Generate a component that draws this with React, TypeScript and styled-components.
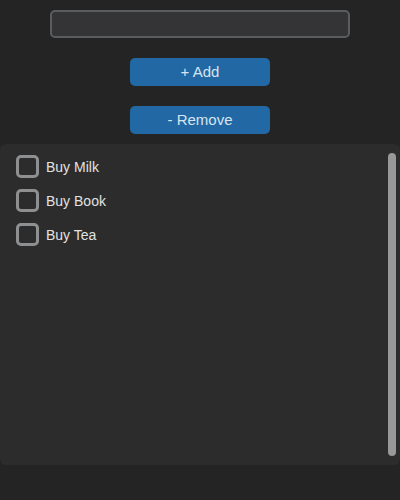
import React, { useState } from "react";
import styled, { createGlobalStyle } from "styled-components";

const Global = createGlobalStyle`
  html, body { margin: 0; padding: 0; background: #242424; }
  body { font-family: "Liberation Sans", Arial, sans-serif; }
`;

const Page = styled.div`
  width: 400px;
  height: 500px;
  display: flex;
  flex-direction: column;
  align-items: center;
  padding-top: 10px;
  box-sizing: border-box;
`;

const TextInput = styled.input`
  width: 300px;
  height: 28px;
  box-sizing: border-box;
  background: #343436;
  border: 2px solid #5a5d60;
  border-radius: 5px;
  outline: none;
  color: #e0e0e0;
  font: 14px "Liberation Sans", Arial, sans-serif;
  padding: 0 8px;
`;

const Button = styled.button<{ $top: number }>`
  margin-top: ${(p) => p.$top}px;
  width: 140px;
  height: 28px;
  border: none;
  border-radius: 5px;
  background: #2168a4;
  color: #d8e4f0;
  font: 15px "Liberation Sans", Arial, sans-serif;
  padding: 0 0 2px 0;
  cursor: pointer;
`;

const Panel = styled.div`
  margin-top: 10px;
  width: 400px;
  height: 321px;
  box-sizing: border-box;
  background: #2c2c2c;
  border-radius: 6px;
  display: flex;
  padding: 11px 4px 9px 16px;
`;

const List = styled.div`
  flex: 1;
  display: flex;
  flex-direction: column;
  gap: 11px;
`;

const Row = styled.label`
  display: flex;
  align-items: center;
  gap: 7px;
  height: 23px;
  color: #e2e2e2;
  font-size: 14px;
  cursor: pointer;
`;

const Box = styled.span<{ $checked: boolean }>`
  width: 23px;
  height: 23px;
  box-sizing: border-box;
  border: 3px solid #8d8f91;
  border-radius: 5px;
  background: ${(p) => (p.$checked ? "#2168a4" : "transparent")};
`;

const Scrollbar = styled.div`
  width: 8px;
  margin-top: -2px;
  margin-bottom: 0px;
  background: #989898;
  border-radius: 4px;
`;

export default function App() {
  const [items] = useState(["Buy Milk", "Buy Book", "Buy Tea"]);
  const [checked, setChecked] = useState<boolean[]>([false, false, false]);
  return (
    <>
      <Global />
      <Page>
        <TextInput />
        <Button $top={20}>+ Add</Button>
        <Button $top={20}>- Remove</Button>
        <Panel>
          <List>
            {items.map((it, i) => (
              <Row
                key={it}
                onClick={() =>
                  setChecked((c) => c.map((v, j) => (j === i ? !v : v)))
                }
              >
                <Box $checked={checked[i]} />
                {it}
              </Row>
            ))}
          </List>
          <Scrollbar />
        </Panel>
      </Page>
    </>
  );
}
